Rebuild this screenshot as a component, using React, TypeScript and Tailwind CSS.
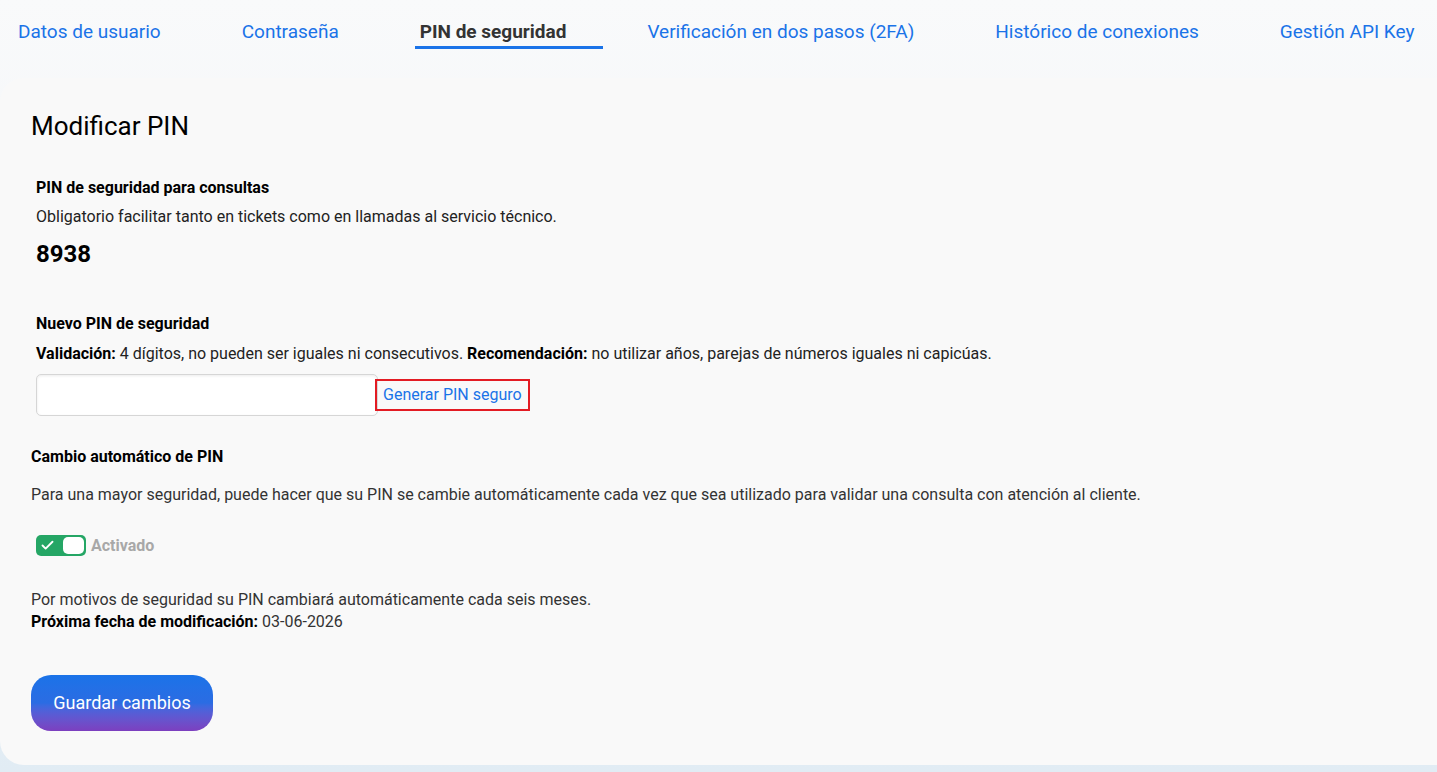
import { Check } from "lucide-react";

const tabs = [
  "Datos de usuario",
  "Contraseña",
  "PIN de seguridad",
  "Verificación en dos pasos (2FA)",
  "Histórico de conexiones",
  "Gestión API Key",
];

function App() {
  return (
    <div
      className="w-full h-[772px] overflow-hidden bg-gradient-to-b from-[#f9fafb] via-[#f1f4f7] to-[#e1ecf4] text-[#222]"
      style={{ fontFamily: "Roboto, 'Liberation Sans', sans-serif" }}
    >
      <nav className="flex items-center gap-[81px] px-[18px] pt-[2px] h-[62px] whitespace-nowrap">
        {tabs.map((t) =>
          t === "PIN de seguridad" ? (
            <div key={t} className="relative leading-[28px]">
              <span className="text-[19px] font-bold text-[#333]">{t}</span>
              <span className="absolute left-[-5px] top-[28px] w-[188px] h-[3px] bg-[#1a73e8]"></span>
            </div>
          ) : (
            <a key={t} className="text-[19px] leading-[28px] text-[#1a73e8]" href="#">
              {t}
            </a>
          )
        )}
      </nav>

      <div className="mt-[16px] h-[687px] bg-[#f9f9f9] rounded-l-[24px] pl-[31px] pt-[31px] text-[16px] leading-[20px]">
        <h1 className="text-[26px] text-black leading-[34px]">Modificar PIN</h1>

        <div className="pl-[5px] mt-[35px]">
          <h3 className="font-bold text-black">PIN de seguridad para consultas</h3>
          <p className="mt-[9px]">
            Obligatorio facilitar tanto en tickets como en llamadas al servicio técnico.
          </p>
          <p className="text-[24px] font-bold text-black leading-[30px] mt-[12px]">8938</p>

          <h3 className="font-bold text-black mt-[45px]">Nuevo PIN de seguridad</h3>
          <p className="mt-[10px]">
            <b className="text-black">Validación:</b> 4 dígitos, no pueden ser iguales ni consecutivos.{" "}
            <b className="text-black">Recomendación:</b> no utilizar años, parejas de números iguales ni capicúas.
          </p>
          <div className="flex items-center mt-[10px]">
            <input
              className="w-[342px] h-[42px] rounded-[5px] border border-[#d6d6d6] bg-white shadow-[inset_0_1px_3px_rgba(0,0,0,0.08)] outline-none"
              type="text"
            />
            <a
              href="#"
              className="ml-[-3px] h-[32px] px-[6px] flex items-center border-2 border-[#e31b23] text-[#1a73e8]"
            >
              Generar PIN seguro
            </a>
          </div>
        </div>

        <h3 className="font-bold text-black mt-[31px]">Cambio automático de PIN</h3>
        <p className="text-[#333] mt-[18px]">
          Para una mayor seguridad, puede hacer que su PIN se cambie automáticamente cada vez que sea utilizado para
          validar una consulta con atención al cliente.
        </p>

        <div className="flex items-center gap-[5px] ml-[5px] mt-[30px]">
          <div className="w-[50px] h-[21px] rounded-[5px] bg-[#25a665] flex items-center justify-between px-[2px]">
            <Check className="w-[15px] h-[15px] text-white ml-[2px]" strokeWidth={3} />
            <span className="w-[21px] h-[17px] rounded-[5px] bg-white"></span>
          </div>
          <span className="font-bold text-[#a8a8a8]">Activado</span>
        </div>

        <p className="text-[#333] leading-[22px] mt-[33px]">
          Por motivos de seguridad su PIN cambiará automáticamente cada seis meses.
        </p>
        <p className="text-[#333] leading-[22px]">
          <b className="text-black">Próxima fecha de modificación:</b> 03-06-2026
        </p>

        <button
          className="mt-[42px] w-[182px] h-[56px] rounded-[20px] bg-gradient-to-b from-[#1a73e8] via-[#2b6ce3] to-[#7c3fbf] text-white text-[18px]"
          type="button"
        >
          Guardar cambios
        </button>
      </div>
    </div>
  );
}

export default App;
